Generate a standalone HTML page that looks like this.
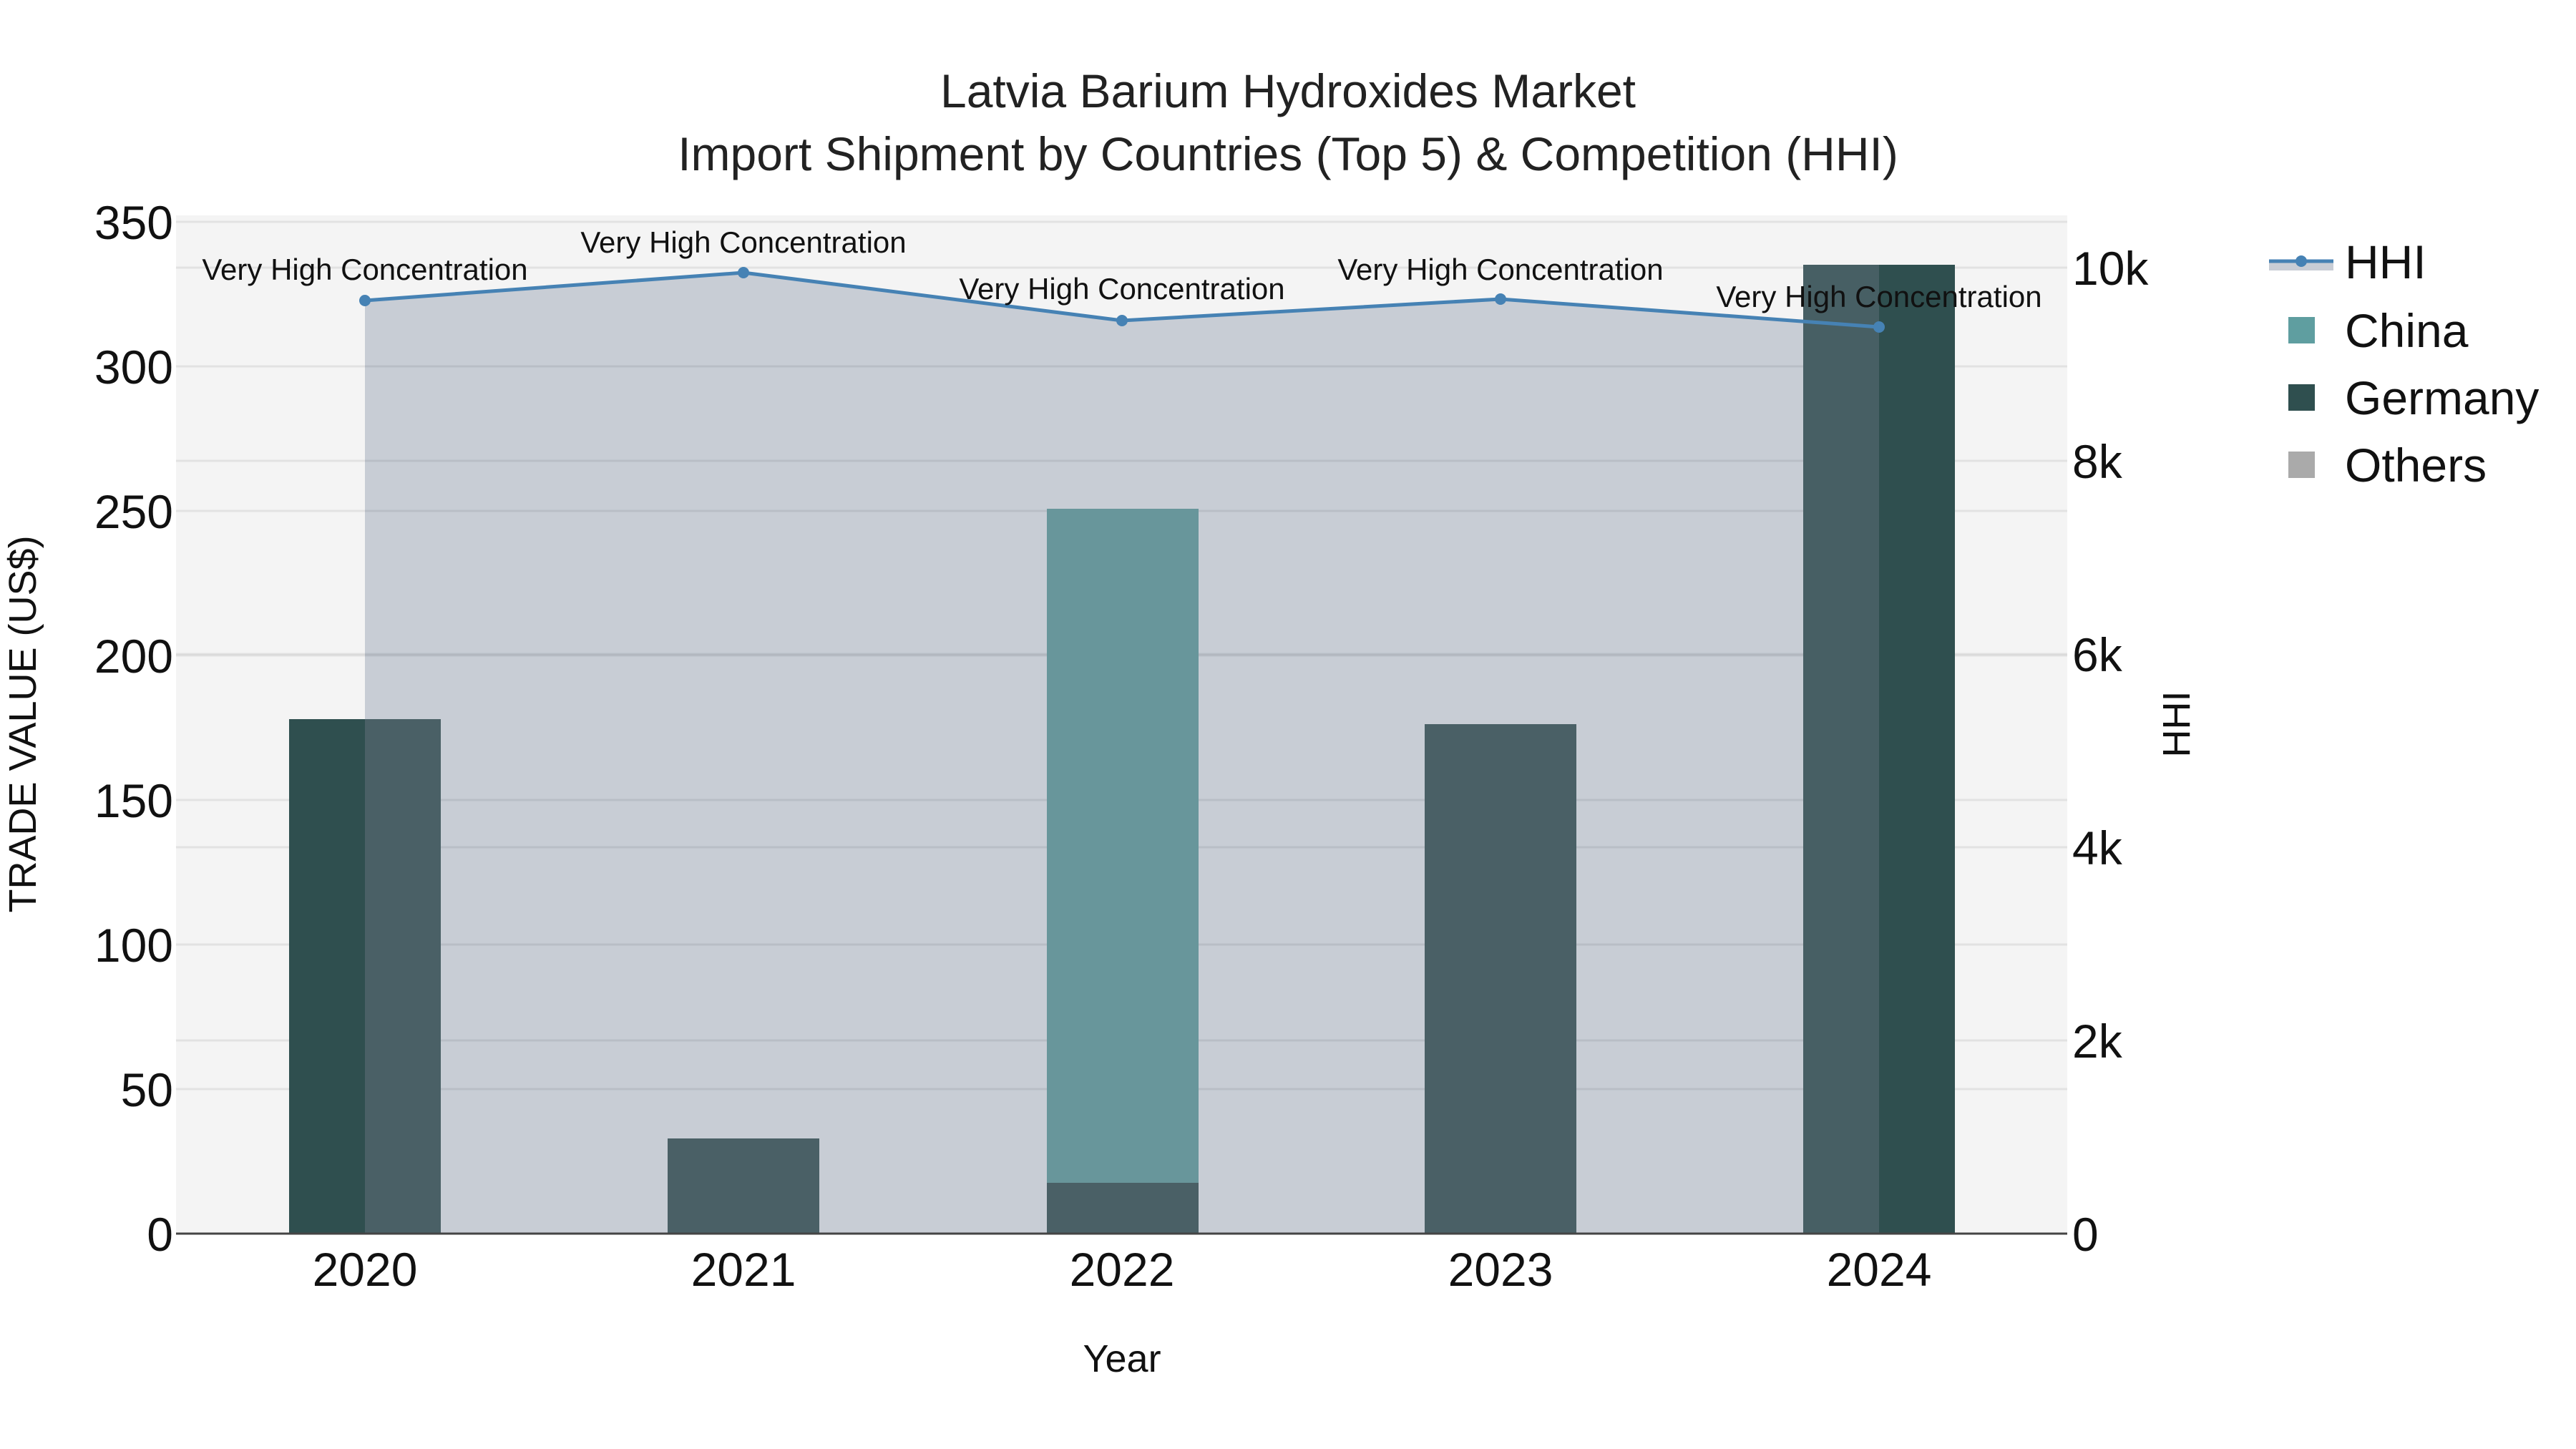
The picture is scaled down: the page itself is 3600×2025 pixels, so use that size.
<!DOCTYPE html>
<html><head><meta charset="utf-8"><style>
html,body{margin:0;padding:0;background:#fff;}
svg{display:block;font-family:"Liberation Sans",Arial,sans-serif;}
</style></head><body>
<svg width="3600" height="2025" viewBox="0 0 3600 2025" xmlns="http://www.w3.org/2000/svg">
<rect width="3600" height="2025" fill="#fff"/>
<text x="1800" y="150" font-size="66" text-anchor="middle" fill="#222">Latvia Barium Hydroxides Market</text>
<text x="1800" y="238" font-size="66" text-anchor="middle" fill="#222">Import Shipment by Countries (Top 5) &amp; Competition (HHI)</text>
<rect x="246" y="301" width="2643" height="1423" fill="#f4f4f4"/>
<polygon points="510,420 1039,381 1568,448 2097,418 2626,457 2626,1724 510,1724" fill="#c8cdd5"/>
<g stroke="#000" stroke-opacity="0.07" stroke-width="3">
<line x1="246" x2="2889" y1="1522" y2="1522"/><line x1="246" x2="2889" y1="1320" y2="1320"/>
<line x1="246" x2="2889" y1="1118" y2="1118"/><line x1="246" x2="2889" y1="916" y2="916"/>
<line x1="246" x2="2889" y1="714" y2="714"/><line x1="246" x2="2889" y1="512" y2="512"/>
<line x1="246" x2="2889" y1="310" y2="310"/>
<line x1="246" x2="2889" y1="1454" y2="1454"/><line x1="246" x2="2889" y1="1184" y2="1184"/>
<line x1="246" x2="2889" y1="914" y2="914"/><line x1="246" x2="2889" y1="644" y2="644"/>
<line x1="246" x2="2889" y1="374" y2="374"/>
</g>
<rect x="404" y="1005" width="106" height="719" fill="#2f4f4f"/>
<rect x="510" y="1005" width="106" height="719" fill="#4a6066"/>
<rect x="933" y="1591" width="212" height="133" fill="#4a6066"/>
<rect x="1463" y="711" width="212" height="942" fill="#68969b"/>
<rect x="1463" y="1653" width="212" height="71" fill="#4a6066"/>
<rect x="1991" y="1012" width="212" height="712" fill="#4a6066"/>
<rect x="2520" y="370" width="106" height="1354" fill="#475f64"/>
<rect x="2626" y="370" width="106" height="1354" fill="#2f4f4f"/>
<line x1="246" x2="2889" y1="1724" y2="1724" stroke="#444" stroke-width="3"/>
<polyline points="510,420 1039,381 1568,448 2097,418 2626,457" fill="none" stroke="#4682b4" stroke-width="5"/>
<g fill="#4682b4"><circle cx="510" cy="420" r="8"/><circle cx="1039" cy="381" r="8"/><circle cx="1568" cy="448" r="8"/><circle cx="2097" cy="418" r="8"/><circle cx="2626" cy="457" r="8"/></g>
<g font-size="42" text-anchor="middle" fill="#111">
<text x="510" y="391">Very High Concentration</text>
<text x="1039" y="353">Very High Concentration</text>
<text x="1568" y="418">Very High Concentration</text>
<text x="2097" y="391">Very High Concentration</text>
<text x="2626" y="429">Very High Concentration</text>
</g>
<g font-size="66" text-anchor="end" fill="#111">
<text x="242" y="1748">0</text><text x="242" y="1546">50</text><text x="242" y="1344">100</text>
<text x="242" y="1142">150</text><text x="242" y="940">200</text><text x="242" y="738">250</text>
<text x="242" y="536">300</text><text x="242" y="334">350</text>
</g>
<g font-size="66" fill="#111">
<text x="2896" y="1748">0</text><text x="2896" y="1478">2k</text><text x="2896" y="1208">4k</text>
<text x="2896" y="938">6k</text><text x="2896" y="668">8k</text><text x="2896" y="398">10k</text>
</g>
<g font-size="66" text-anchor="middle" fill="#111">
<text x="510" y="1797">2020</text><text x="1039" y="1797">2021</text><text x="1568" y="1797">2022</text>
<text x="2097" y="1797">2023</text><text x="2626" y="1797">2024</text>
</g>
<text x="1568" y="1917" font-size="54" text-anchor="middle" fill="#111">Year</text>
<text transform="translate(50,1012) rotate(-90)" font-size="54" text-anchor="middle" fill="#111">TRADE VALUE (US$)</text>
<text transform="translate(3060,1012) rotate(-90)" font-size="54" text-anchor="middle" fill="#111">HHI</text>
<rect x="3171" y="366" width="90" height="12" fill="#c8cdd5"/>
<line x1="3171" x2="3261" y1="365" y2="365" stroke="#4682b4" stroke-width="5"/>
<circle cx="3216" cy="365" r="8" fill="#4682b4"/>
<rect x="3198" y="443" width="37" height="37" fill="#5f9ea0"/>
<rect x="3198" y="537" width="37" height="37" fill="#2f4f4f"/>
<rect x="3198" y="631" width="37" height="37" fill="#aaaaaa"/>
<g font-size="66" fill="#111">
<text x="3277" y="389">HHI</text><text x="3277" y="485">China</text>
<text x="3277" y="579">Germany</text><text x="3277" y="673">Others</text>
</g>
</svg>
</body></html>
